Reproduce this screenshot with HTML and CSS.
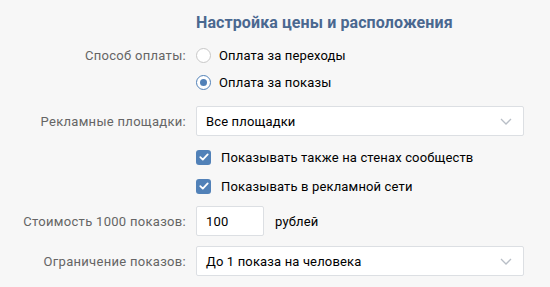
FILE: index.html
```html
<!DOCTYPE html>
<html lang="ru">
<head>
  <meta charset="UTF-8">
  <title>Настройка цены и расположения</title>
  <link rel="stylesheet" href="styles.css">
</head>
<body>

  <div class="settings">
    <h2 class="title">Настройка цены и расположения</h2>

    <div class="row row-radio first">
      <div class="label">Способ оплаты:</div>
      <label class="option">
        <span class="radio"></span>
        Оплата за переходы
      </label>
    </div>

    <div class="row row-radio">
      <div class="label"></div>
      <label class="option">
        <span class="radio checked"></span>
        Оплата за показы
      </label>
    </div>

    <div class="row row-field">
      <div class="label">Рекламные площадки:</div>
      <div class="select">
        <span>Все площадки</span>
        <svg class="chevron" width="12" height="7" viewBox="0 0 12 7">
          <path d="M1 1l5 5 5-5" fill="none" stroke="#b8bec6" stroke-width="1.3"/>
        </svg>
      </div>
    </div>

    <div class="row row-check">
      <div class="label"></div>
      <label class="option">
        <span class="checkbox">
          <svg width="10" height="8" viewBox="0 0 10 8">
            <path d="M1.3 4.2l2.5 2.4 4.9-5.2" fill="none" stroke="#fff" stroke-width="1.8" stroke-linecap="round" stroke-linejoin="round"/>
          </svg>
        </span>
        Показывать также на стенах сообществ
      </label>
    </div>

    <div class="row row-check tight">
      <div class="label"></div>
      <label class="option">
        <span class="checkbox">
          <svg width="10" height="8" viewBox="0 0 10 8">
            <path d="M1.3 4.2l2.5 2.4 4.9-5.2" fill="none" stroke="#fff" stroke-width="1.8" stroke-linecap="round" stroke-linejoin="round"/>
          </svg>
        </span>
        Показывать в рекламной сети
      </label>
    </div>

    <div class="row row-field">
      <div class="label">Стоимость 1000 показов:</div>
      <div class="input">100</div>
      <span class="unit">рублей</span>
    </div>

    <div class="row row-field">
      <div class="label">Ограничение показов:</div>
      <div class="select">
        <span>До 1 показа на человека</span>
        <svg class="chevron" width="12" height="7" viewBox="0 0 12 7">
          <path d="M1 1l5 5 5-5" fill="none" stroke="#b8bec6" stroke-width="1.3"/>
        </svg>
      </div>
    </div>
  </div>

</body>
</html>
```

FILE: styles.css
```css
* {
  box-sizing: border-box;
}

body {
  margin: 0;
  background-color: #f7f7f7;
  font-family: Roboto, "Liberation Sans", sans-serif;
  font-size: 13px;
  letter-spacing: 0.15px;
  color: #000;
}

.settings {
  display: flex;
  flex-direction: column;
  width: 550px;
}

.title {
  margin: 0;
  height: 44px;
  line-height: 46px;
  padding-left: 196px;
  font-size: 16px;
  font-weight: bold;
  letter-spacing: 0.1px;
  color: #4a6890;
}

.row {
  display: flex;
  align-items: center;
}

.label {
  width: 196px;
  padding-right: 10px;
  text-align: right;
  color: #656565;
  letter-spacing: 0.3px;
  flex-shrink: 0;
}

.row-radio {
  height: 22px;
  margin-top: 5px;
}

.row-radio.first {
  margin-top: 0;
}

.row-field {
  height: 30px;
  margin-top: 10px;
}

.row-radio + .row-field {
  margin-top: 13px;
}

.row-check {
  height: 20px;
  margin-top: 11px;
}

.row-check.tight {
  margin-top: 9px;
}

.option {
  display: flex;
  align-items: center;
}

.radio {
  width: 15px;
  height: 15px;
  border: 1px solid #c8c8c8;
  border-radius: 50%;
  background-color: #fff;
  margin-right: 8px;
  display: flex;
  align-items: center;
  justify-content: center;
}

.radio.checked {
  border-color: #5181b8;
}

.radio.checked::after {
  content: "";
  width: 7px;
  height: 7px;
  border-radius: 50%;
  background-color: #5181b8;
}

.checkbox {
  width: 15px;
  height: 15px;
  border-radius: 3px;
  background-color: #5181b8;
  margin-right: 10px;
  display: flex;
  align-items: center;
  justify-content: center;
}

.select,
.input {
  height: 30px;
  background-color: #fff;
  border: 1px solid #dcdfe3;
  border-radius: 2px;
  display: flex;
  align-items: center;
  padding: 0 9px;
}

.select {
  width: 328px;
  justify-content: space-between;
}

.chevron {
  margin-right: 2px;
}

.input {
  width: 68px;
}

.unit {
  margin-left: 11px;
}
```
